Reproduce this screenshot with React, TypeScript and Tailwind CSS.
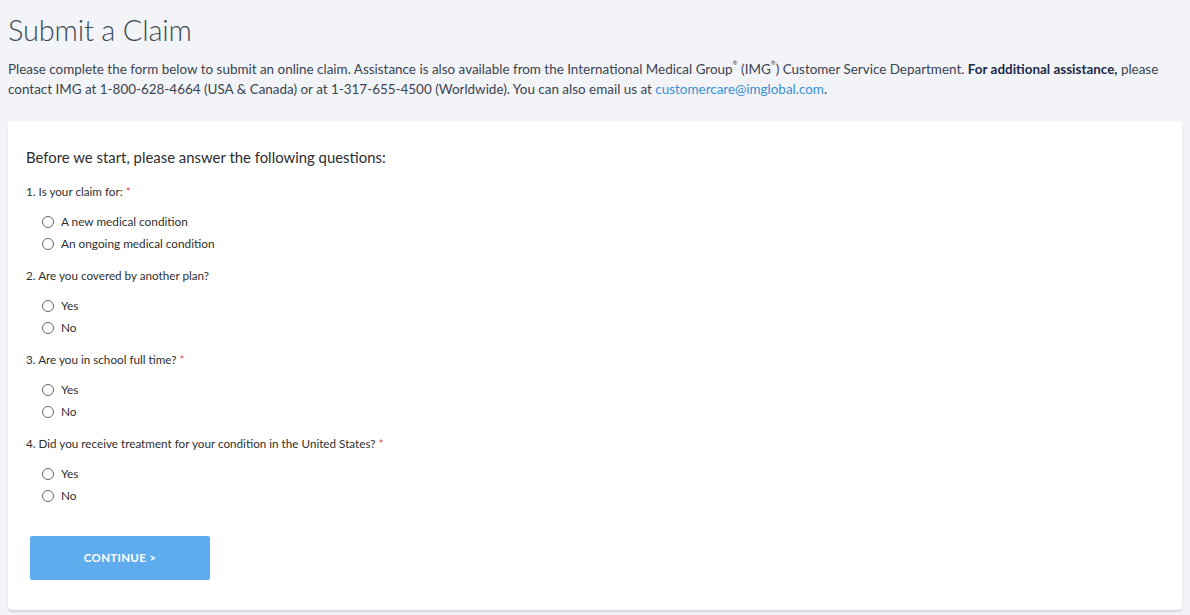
const questions = [
  { label: "1. Is your claim for:", required: true, options: ["A new medical condition", "An ongoing medical condition"] },
  { label: "2. Are you covered by another plan?", required: false, options: ["Yes", "No"] },
  { label: "3. Are you in school full time?", required: true, options: ["Yes", "No"] },
  { label: "4. Did you receive treatment for your condition in the United States?", required: true, options: ["Yes", "No"] },
];

function Radio({ label }: { label: string }) {
  return (
    <label className="flex items-center h-[22px] text-[11.8px] text-[#2f2f2f]">
      <span className="w-[12px] h-[12px] rounded-full border border-[#666] bg-white ml-[16px] mr-[7px] shrink-0" />
      {label}
    </label>
  );
}

export default function App() {
  return (
    <div
      className="min-h-[615px] bg-[#f3f4f8] px-[8px] pt-[8px]"
      style={{ fontFamily: "Lato, 'Open Sans', sans-serif" }}
    >
      <h1 className="text-[29px] font-light leading-[44px] text-[#3e4a59] tracking-[-0.2px]">Submit a Claim</h1>
      <p className="mt-[8px] text-[13.45px] leading-[19.5px] text-[#3a4350]">
        <span className="block whitespace-nowrap">
          Please complete the form below to submit an online claim. Assistance is also available from the International Medical Group
          <span className="align-top text-[6px] leading-none">®</span> (IMG<span className="align-top text-[6px] leading-none">®</span>)
          Customer Service Department. <b className="font-bold text-[#1b2a48]">For additional assistance,</b> please
        </span>
        <span className="block whitespace-nowrap">
          contact IMG at 1-800-628-4664 (USA &amp; Canada) or at 1-317-655-4500 (Worldwide). You can also email us at{" "}
          <a className="text-[#3a8fd4]">customercare@imglobal.com</a>.
        </span>
      </p>
      <div className="mt-[22px] w-[1174px] bg-white rounded-[4px] shadow-[0_2px_2px_rgba(0,0,0,0.12)] pl-[18px] pt-[24px] pb-[30px]">
        <h2 className="text-[14.9px] leading-[24px] text-[#2d2d2d]">Before we start, please answer the following questions:</h2>
        <div className="mt-[13px] flex flex-col">
          {questions.map((q) => (
            <div key={q.label} className="mb-[11px]">
              <div className="text-[11.7px] leading-[18px] text-[#2f2f2f]">
                {q.label}
                {q.required && <span className="text-[#e0454b]"> *</span>}
              </div>
              <div className="mt-[11px] flex flex-col">
                {q.options.map((o) => (
                  <Radio key={o} label={o} />
                ))}
              </div>
            </div>
          ))}
        </div>
        <button className="mt-[18px] ml-[4px] w-[180px] h-[44px] rounded-[2px] bg-[#5eabed] text-white text-[11.5px] font-bold tracking-[0.3px]">
          CONTINUE &gt;
        </button>
      </div>
    </div>
  );
}
